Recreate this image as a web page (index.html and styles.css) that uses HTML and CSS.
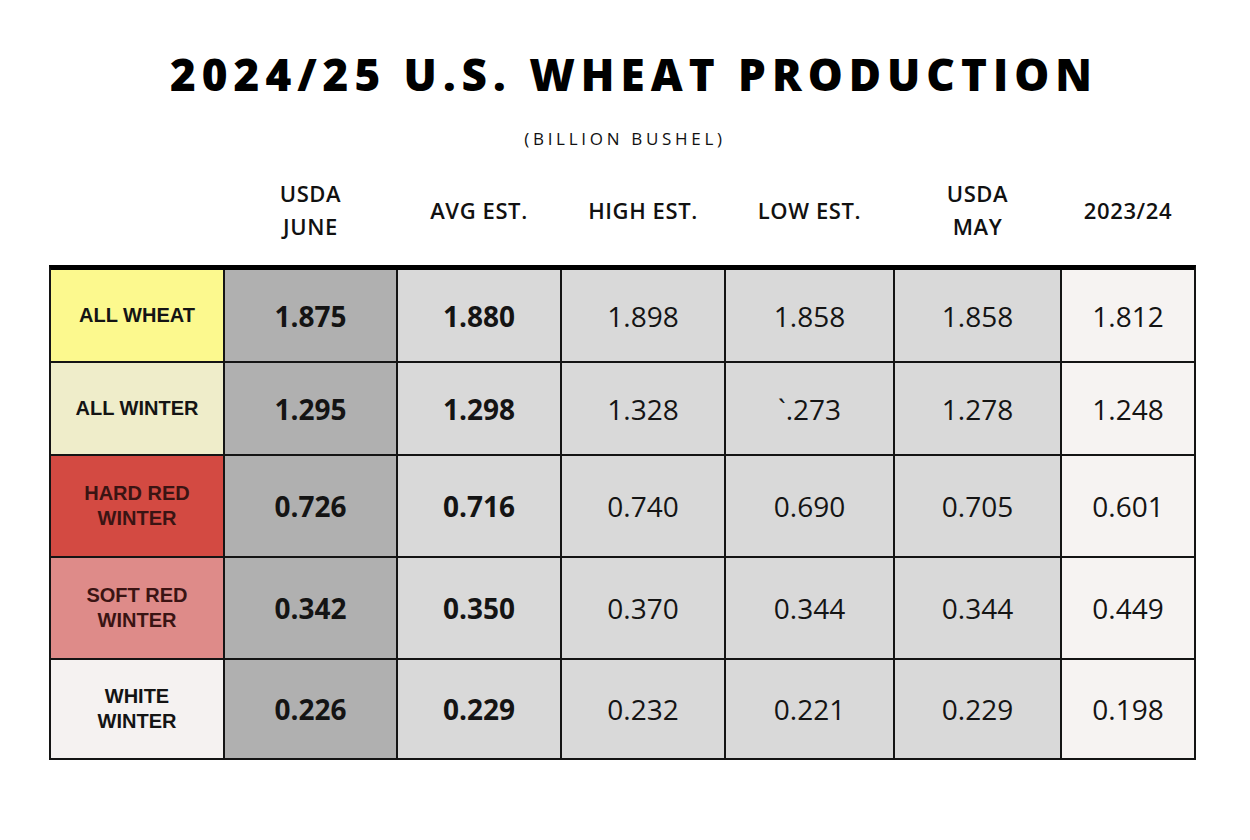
FILE: index.html
```html
<!DOCTYPE html>
<html lang="en">
<head>
<meta charset="utf-8">
<title>2024/25 U.S. Wheat Production</title>
<link rel="stylesheet" href="styles.css">
</head>
<body>
<div class="page">
  <h1 class="title">2024/25 U.S. WHEAT PRODUCTION</h1>
  <p class="subtitle">(BILLION BUSHEL)</p>
  <div class="sheet">
    <div class="head">
      <div class="hcell"></div>
      <div class="hcell">USDA<br>JUNE</div>
      <div class="hcell">AVG EST.</div>
      <div class="hcell">HIGH EST.</div>
      <div class="hcell">LOW EST.</div>
      <div class="hcell">USDA<br>MAY</div>
      <div class="hcell">2023/24</div>
    </div>
    <div class="grid">
      <div class="cell label c-yellow">ALL WHEAT</div>
      <div class="cell num bold g-dark">1.875</div>
      <div class="cell num bold g-light">1.880</div>
      <div class="cell num g-light">1.898</div>
      <div class="cell num g-light">1.858</div>
      <div class="cell num g-light">1.858</div>
      <div class="cell num g-white">1.812</div>

      <div class="cell label c-cream">ALL WINTER</div>
      <div class="cell num bold g-dark">1.295</div>
      <div class="cell num bold g-light">1.298</div>
      <div class="cell num g-light">1.328</div>
      <div class="cell num g-light">`.273</div>
      <div class="cell num g-light">1.278</div>
      <div class="cell num g-white">1.248</div>

      <div class="cell label c-red dark-text">HARD RED<br>WINTER</div>
      <div class="cell num bold g-dark">0.726</div>
      <div class="cell num bold g-light">0.716</div>
      <div class="cell num g-light">0.740</div>
      <div class="cell num g-light">0.690</div>
      <div class="cell num g-light">0.705</div>
      <div class="cell num g-white">0.601</div>

      <div class="cell label c-pink dark-text">SOFT RED<br>WINTER</div>
      <div class="cell num bold g-dark">0.342</div>
      <div class="cell num bold g-light">0.350</div>
      <div class="cell num g-light">0.370</div>
      <div class="cell num g-light">0.344</div>
      <div class="cell num g-light">0.344</div>
      <div class="cell num g-white">0.449</div>

      <div class="cell label c-white">WHITE<br>WINTER</div>
      <div class="cell num bold g-dark">0.226</div>
      <div class="cell num bold g-light">0.229</div>
      <div class="cell num g-light">0.232</div>
      <div class="cell num g-light">0.221</div>
      <div class="cell num g-light">0.229</div>
      <div class="cell num g-white">0.198</div>
    </div>
  </div>
</div>
</body>
</html>
```

FILE: styles.css
```css
html, body {
  margin: 0;
  padding: 0;
  background: #ffffff;
}

.page {
  width: 1250px;
  height: 840px;
  box-sizing: border-box;
  padding-top: 52px;
  overflow: hidden;
  font-family: "Open Sans", "Liberation Sans", sans-serif;
  color: #111111;
}

.title {
  margin: 0;
  padding-left: 18px;
  font-family: "Open Sans", sans-serif;
  font-weight: 800;
  font-size: 44px;
  line-height: 1;
  letter-spacing: 6px;
  text-align: center;
  color: #000000;
}

.subtitle {
  margin: 34px 0 0;
  padding-left: 0;
  font-family: "Open Sans", sans-serif;
  font-weight: 400;
  font-size: 17px;
  line-height: 1;
  letter-spacing: 3.7px;
  text-align: center;
  color: #111111;
}

.sheet {
  width: 1147px;
  margin: 8px 0 0 49px;
}

.head {
  display: grid;
  grid-template-columns: 172px 171px 162px 162px 167px 165px 132px;
  column-gap: 2px;
  padding: 0 2px;
  height: 110px;
}

.hcell {
  display: flex;
  align-items: center;
  justify-content: center;
  text-align: center;
  font-family: "Open Sans", sans-serif;
  font-weight: 600;
  font-size: 22px;
  line-height: 33px;
  letter-spacing: 0.6px;
  color: #111111;
}

.grid {
  display: grid;
  grid-template-columns: 172px 171px 162px 162px 167px 165px 132px;
  grid-template-rows: 91px 91px 100px 100px 98px;
  gap: 2px;
  background: #141414;
  border: 2px solid #141414;
  border-top: 5px solid #000000;
}

.cell {
  display: flex;
  align-items: center;
  justify-content: center;
  text-align: center;
}

.label {
  font-family: "Liberation Sans", Arial, sans-serif;
  font-weight: 700;
  font-size: 20px;
  line-height: 25px;
  color: #141414;
}

.dark-text {
  color: #3a1413;
}

.num {
  font-family: "Open Sans", sans-serif;
  font-weight: 400;
  font-size: 28px;
  color: #141414;
}

.num.bold {
  font-weight: 700;
}

.c-yellow { background: #fcf98e; }
.c-cream { background: #efedca; }
.c-red { background: #d34a42; }
.c-pink { background: #de8b89; }
.c-white { background: #f5f2f1; }

.g-dark { background: #b0b0b0; }
.g-light { background: #d9d9d9; }
.g-white { background: #f6f3f2; }
```
